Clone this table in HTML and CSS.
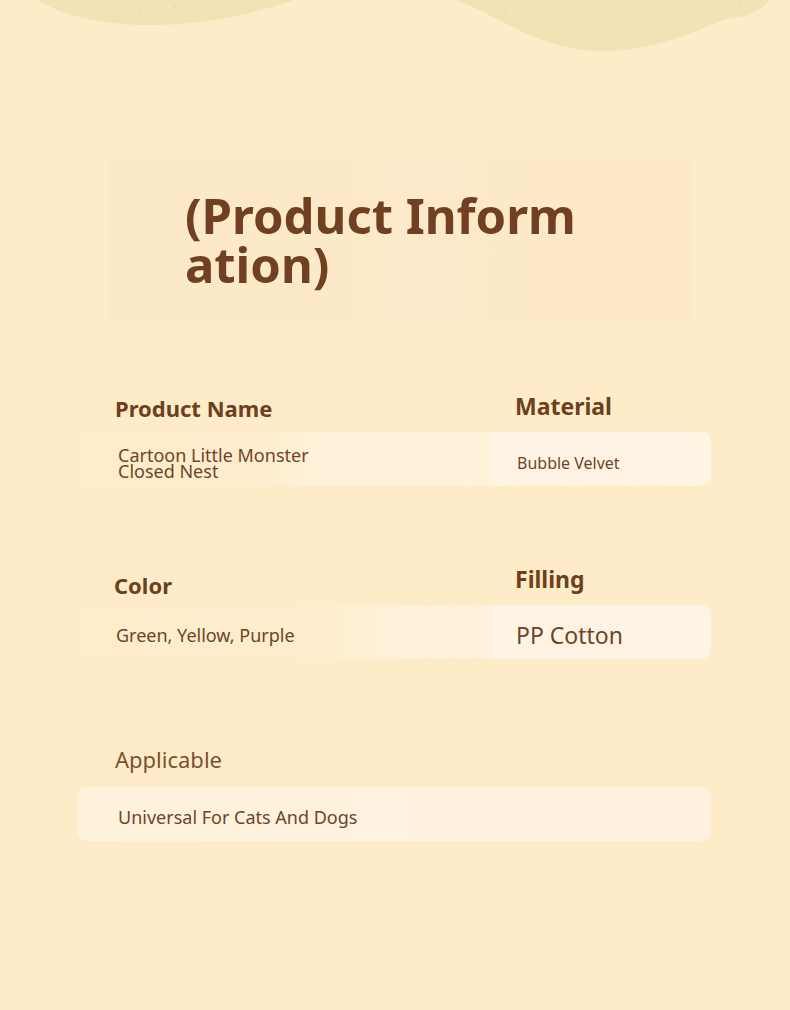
FILE: index.html
```html
<!DOCTYPE html>
<html lang="en">
<head>
<meta charset="utf-8">
<title>Product Information</title>
<link rel="stylesheet" href="styles.css">
</head>
<body>
<div class="page">
  <svg class="deco" width="790" height="60" viewBox="0 0 790 60" aria-hidden="true">
    <path class="blob" d="M38,0 C58,14 100,26 158,25 C215,24 262,11 294,0 Z"/>
    <path class="blob" d="M455,0 C494,12 527,45 592,51 C642,54 690,34 718,22 C732,16 742,19 754,12 C764,7 768,3 770,0 Z"/>
    <g class="speck">
      <circle cx="96" cy="8" r="1.2"/><circle cx="140" cy="14" r="1"/><circle cx="175" cy="6" r="1.1"/>
      <circle cx="210" cy="12" r="0.9"/><circle cx="248" cy="4" r="1"/><circle cx="120" cy="18" r="0.8"/>
      <circle cx="505" cy="10" r="1"/><circle cx="530" cy="26" r="1.1"/><circle cx="560" cy="38" r="0.9"/>
      <circle cx="600" cy="30" r="1.2"/><circle cx="630" cy="42" r="1"/><circle cx="655" cy="22" r="0.9"/>
      <circle cx="690" cy="12" r="1"/><circle cx="740" cy="6" r="1"/><circle cx="575" cy="15" r="0.8"/>
    </g>
  </svg>

  <div class="title-card">
    <h1 class="title">(Product Information)</h1>
  </div>

  <section class="section s1">
    <div class="labels">
      <div class="label l-left">Product Name</div>
      <div class="label l-right big r1">Material</div>
    </div>
    <div class="value-box v1">
      <div class="value v-left two-line">Cartoon Little Monster<br>Closed Nest</div>
      <div class="value v-right sm">Bubble Velvet</div>
    </div>
  </section>

  <section class="section s2">
    <div class="labels">
      <div class="label l-left">Color</div>
      <div class="label l-right big r2">Filling</div>
    </div>
    <div class="value-box v2">
      <div class="value v-left">Green, Yellow, Purple</div>
      <div class="value v-right lg">PP Cotton</div>
    </div>
  </section>

  <section class="section s3">
    <div class="labels">
      <div class="label l-left light">Applicable</div>
    </div>
    <div class="value-box v3">
      <div class="value v-wide">Universal For Cats And Dogs</div>
    </div>
  </section>
</div>
</body>
</html>
```

FILE: styles.css
```css
* { box-sizing: border-box; }

html, body {
  margin: 0;
  padding: 0;
  background: #feebc7;
}

.page {
  position: relative;
  width: 790px;
  height: 1010px;
  overflow: hidden;
  background: #feebc7;
  font-family: "Noto Sans", "Open Sans", sans-serif;
  color: #6c3f1d;
}

.deco {
  position: absolute;
  top: 0;
  left: 0;
}

.blob { fill: #f4e2b7; }
.speck circle { fill: #e3c98f; opacity: 0.6; }

.title-card {
  margin: 160px 0 0 107px;
  width: 583px;
  height: 160px;
  padding: 31px 0 0 78px;
  background: linear-gradient(90deg, rgba(248,229,198,0.4), rgba(250,232,204,0.5) 55%, rgba(252,228,198,0.35));
}

.title {
  margin: 0;
  width: 410px;
  font-size: 49px;
  line-height: 49px;
  font-weight: 700;
  color: #704020;
  word-break: break-all;
}

.section {
  margin-left: 80px;
  width: 631px;
}

.s1 { margin-top: 75px; }
.s2 { margin-top: 82px; }
.s3 { margin-top: 88px; margin-left: 77px; width: 634px; }

.labels {
  display: grid;
  grid-template-columns: 435px 1fr;
  align-items: end;
  height: 23px;
}

.label {
  font-size: 22px;
  line-height: 22px;
  font-weight: 700;
  color: #6c3f1d;
}

.label.big {
  font-size: 23px;
  line-height: 23px;
}

.label.r1 { margin-bottom: 1px; }
.label.r2 { margin-bottom: 5px; }

.label.light {
  font-weight: 400;
  font-size: 22px;
  line-height: 22px;
  color: #7a5232;
}

.l-left { padding-left: 35px; }
.s2 .l-left { padding-left: 34px; }
.s3 .l-left { padding-left: 38px; }
.l-right { grid-column: 2; }

.value-box {
  display: grid;
  grid-template-columns: 435px 1fr;
  align-items: center;
  border-radius: 0 9px 9px 0;
}

.s1 .value-box { margin-top: 14px; }
.s2 .value-box { margin-top: 14px; }
.s3 .value-box { margin-top: 17px; }

.v1 {
  height: 54px;
  padding-top: 7px;
  background:
    linear-gradient(90deg, rgba(255,246,232,0) 0, rgba(255,246,232,0) 408px, rgba(255,247,236,0.45) 414px),
    linear-gradient(90deg, rgba(255,246,232,0.12) 0, rgba(255,246,232,0.18) 170px, rgba(255,244,228,0.7) 250px, rgba(255,244,228,0.75) 100%);
}

.v2 {
  height: 54px;
  padding-top: 6px;
  background:
    linear-gradient(90deg, rgba(255,246,232,0) 0, rgba(255,246,232,0) 408px, rgba(255,247,236,0.45) 414px),
    linear-gradient(90deg, rgba(255,246,232,0.12) 0, rgba(255,246,232,0.2) 240px, rgba(255,244,228,0.7) 330px, rgba(255,244,228,0.75) 100%);
}

.v3 {
  height: 54px;
  padding-top: 6px;
  border-radius: 9px;
  grid-template-columns: 1fr;
  background: linear-gradient(90deg, rgba(255,244,226,0.8), rgba(255,243,226,0.85) 50%, rgba(255,242,224,0.9));
}

.value {
  font-size: 18px;
  line-height: 18px;
  color: #6e4427;
}

.value.two-line { line-height: 16px; }
.value.sm { font-size: 16px; line-height: 16px; }
.value.lg { font-size: 23px; line-height: 23px; }

.v1 .v-left { padding-left: 38px; }
.v1 .v-right { padding-left: 2px; }
.v2 .v-left { padding-left: 36px; }
.v2 .v-right { padding-left: 1px; }

.v-wide {
  padding-left: 41px;
  font-size: 18px;
  line-height: 18px;
}
```
